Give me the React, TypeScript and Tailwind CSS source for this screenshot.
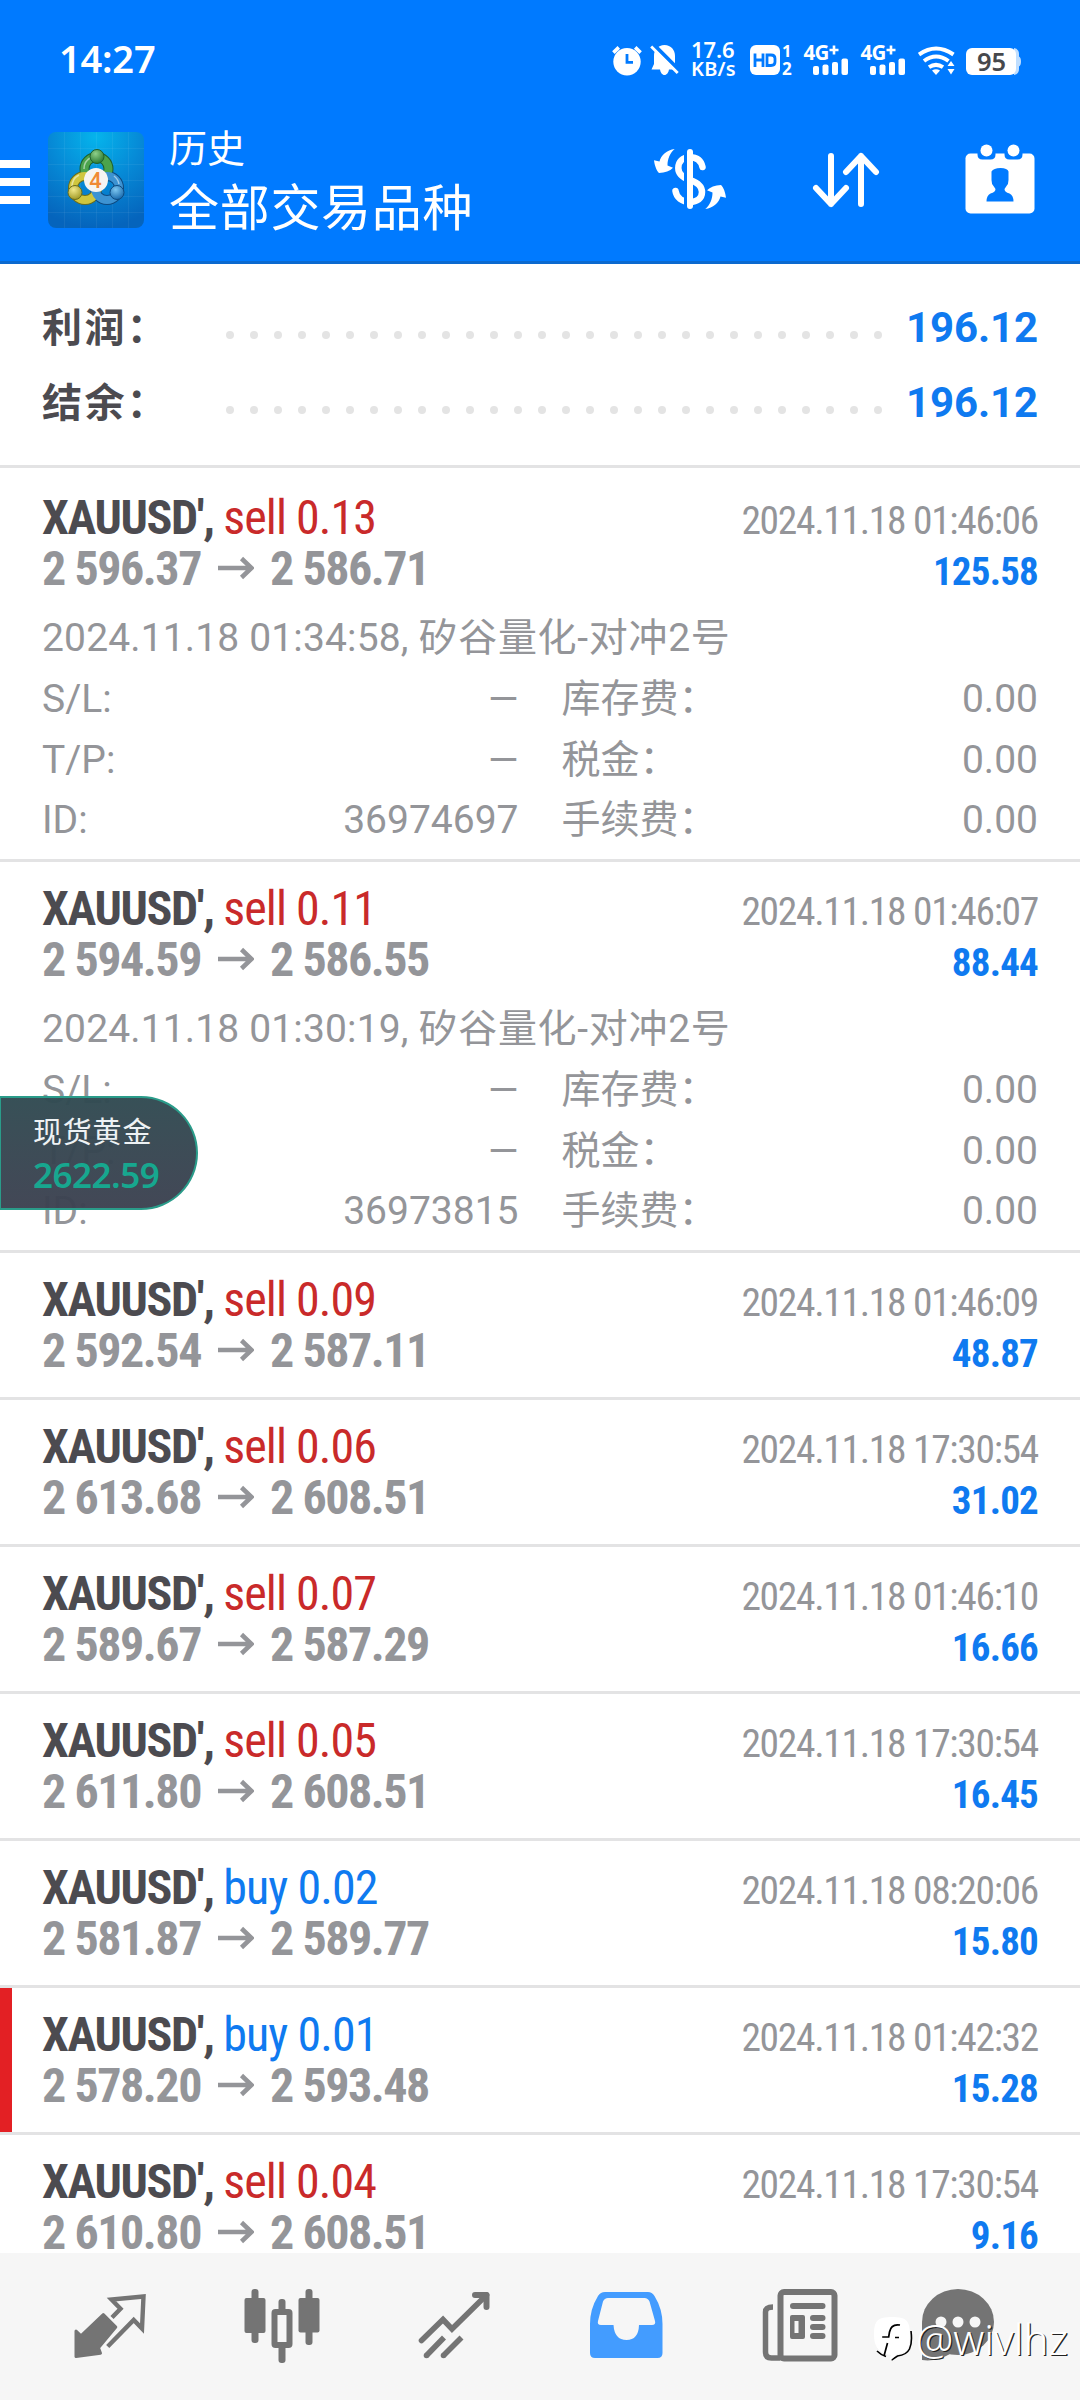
interface IDeal {
  side: 'sell' | 'buy';
  volume: string;
  open: string;
  close: string;
  time: string;
  profit: string;
  marked?: boolean;
  details?: { time: string; comment: string; id: string };
}

const deals: IDeal[] = [
  {
    side: 'sell', volume: '0.13', open: '2 596.37', close: '2 586.71', time: '2024.11.18 01:46:06', profit: '125.58',
    details: { time: '2024.11.18 01:34:58', comment: '矽谷量化-对冲2号', id: '36974697' }
  },
  {
    side: 'sell', volume: '0.11', open: '2 594.59', close: '2 586.55', time: '2024.11.18 01:46:07', profit: '88.44',
    details: { time: '2024.11.18 01:30:19', comment: '矽谷量化-对冲2号', id: '36973815' }
  },
  { side: 'sell', volume: '0.09', open: '2 592.54', close: '2 587.11', time: '2024.11.18 01:46:09', profit: '48.87' },
  { side: 'sell', volume: '0.06', open: '2 613.68', close: '2 608.51', time: '2024.11.18 17:30:54', profit: '31.02' },
  { side: 'sell', volume: '0.07', open: '2 589.67', close: '2 587.29', time: '2024.11.18 01:46:10', profit: '16.66' },
  { side: 'sell', volume: '0.05', open: '2 611.80', close: '2 608.51', time: '2024.11.18 17:30:54', profit: '16.45' },
  { side: 'buy', volume: '0.02', open: '2 581.87', close: '2 589.77', time: '2024.11.18 08:20:06', profit: '15.80' },
  { side: 'buy', volume: '0.01', open: '2 578.20', close: '2 593.48', time: '2024.11.18 01:42:32', profit: '15.28', marked: true },
  { side: 'sell', volume: '0.04', open: '2 610.80', close: '2 608.51', time: '2024.11.18 17:30:54', profit: '9.16' }
];

const Signal = () => (
  <svg className="w-[46px] h-8 overflow-visible" viewBox="803 44 46 32" fill="white">
    <text x="803.5" y="60" fontSize="20.5" fontWeight="700" letterSpacing="-0.8" fontFamily="Noto Sans">4G</text>
    <path d="M829.5 50h9M834 45.500v9" stroke="white" strokeWidth="2.6" />
    <rect x="813" y="66" width="6" height="9" rx="2" />
    <rect x="822.5" y="64.5" width="6" height="10.5" rx="2" />
    <rect x="832" y="62" width="6" height="13" rx="2" />
    <rect x="841.5" y="58.5" width="6.5" height="16.5" rx="2" />
  </svg>
);

const StatusBar = () => (
  <div className="h-[96px] pt-6 pl-[59px] pr-[59px] flex items-center justify-between text-white">
    <div className="mb-[4px] font-['Noto_Sans',sans-serif] font-semibold text-[38px] leading-none tracking-[-0.2px]">14:27</div>
    <div className="flex items-center">
      <svg className="w-[30px] h-8" viewBox="612 44 30 32">
        <circle cx="627" cy="61.7" r="13.7" fill="white" />
        <path d="M613.4 52.6l5.4-5.2M640.6 52.6l-5.4-5.2" stroke="white" strokeWidth="3.6" />
        <path d="M627 54v8.4h6" stroke="#007aff" strokeWidth="2.8" fill="none" />
      </svg>
      <svg className="w-[30px] h-8 ml-[8px]" viewBox="650 44 30 32">
        <path d="M664.500 45c-6.600 0-10.500 5-10.500 11v8l-2.500 5.500h8.500c.5 3 2.200 5.500 4.500 5.500s4-2.500 4.500-5.500h8.500l-2.500-5.500v-8c0-6-3.900-11-10.500-11z" fill="white" />
        <path d="M652 43l28 28" stroke="#007aff" strokeWidth="4" />
        <path d="M651.200 46.500l26.500 26.500" stroke="white" strokeWidth="2.800" />
      </svg>
      <div className="ml-[11px] w-[46px] mb-[3px] font-['Noto_Sans',sans-serif] font-semibold whitespace-nowrap">
        <div className="text-[22px] leading-[20px] tracking-[-0.1px]">17.6</div>
        <div className="text-[20px] leading-[19px] tracking-[0.2px]">KB/s</div>
      </div>
      <svg className="w-[44px] h-8 ml-[13px] overflow-visible" viewBox="750 44 44 32">
        <rect x="750" y="45" width="30" height="30" rx="6" fill="white" />
        <path d="M755 53.500v13.500M763 53.500v13.500M755 60h8M767 55h4q4 0 4 3.500v3.500q0 3.500-4 3.500h-4z" stroke="#007aff" strokeWidth="2.800" fill="none" />
        <text x="782" y="57" fontSize="16.500" fontWeight="700" fill="white" fontFamily="Noto Sans">1</text>
        <text x="782" y="75" fontSize="17" fontWeight="700" fill="white" fontFamily="Noto Sans">2</text>
      </svg>
      <div className="ml-[9px]"><Signal /></div>
      <div className="ml-[11px]"><Signal /></div>
      <svg className="w-[38px] h-8 ml-[12px]" viewBox="918 44 38 32" fill="none" stroke="white" strokeWidth="4">
        <path d="M919 54.500q17-12 34.500 0" />
        <path d="M924 61q12-9 24.500 0" />
        <path d="M929 67.200q7-4.700 14 0" />
        <path d="M932 70.500q4-2.500 8 0l-4 4.500z" fill="white" stroke="none" />
        <path d="M947.500 66l3.500-5 3.500 5zM947.500 69l3.500 5.500 3.500-5.500z" fill="white" stroke="none" />
      </svg>
      <svg className="w-[55px] h-8 ml-[10px] overflow-visible" viewBox="966 44 55 32">
        <path d="M1014 48q5 1 5 6v2.500q2 1 2 5t-2 5v2.500q0 5-5 6z" fill="#bfdeff" />
        <rect x="966" y="48" width="50" height="27" rx="6" fill="white" />
        <text x="991.500" y="71" fontSize="25.500" fontWeight="600" textAnchor="middle" fill="#46484c" fontFamily="Noto Sans">95</text>
      </svg>
    </div>
  </div>
);

const AppLogo = () => (
  <svg className="size-24" viewBox="0 0 96 96">
    <defs>
      <radialGradient id="sky" cx="0.5" cy="0.05" r="0.95">
        <stop offset="0" stopColor="#05b4ec" />
        <stop offset="0.5" stopColor="#0689d6" />
        <stop offset="1" stopColor="#0564bc" />
      </radialGradient>
      <radialGradient id="green" cx="0.4" cy="0.3" r="0.8">
        <stop offset="0" stopColor="#8fd08a" />
        <stop offset="1" stopColor="#1d6e27" />
      </radialGradient>
      <radialGradient id="yellow" cx="0.4" cy="0.3" r="0.8">
        <stop offset="0" stopColor="#f2e98a" />
        <stop offset="1" stopColor="#96901a" />
      </radialGradient>
      <radialGradient id="blue" cx="0.4" cy="0.3" r="0.8">
        <stop offset="0" stopColor="#7cc6f0" />
        <stop offset="1" stopColor="#0d5fa5" />
      </radialGradient>
    </defs>
    <rect width="96" height="96" rx="8" fill="url(#sky)" />
    <path
      d="M16.500 0v96M32.500 0v96M48.500 0v96M64.500 0v96M80.500 0v96M0 16.500h96M0 32.500h96M0 48.500h96M0 64.500h96M0 80.500h96"
      stroke="white" strokeOpacity="0.060"
    />
    <g fill="none" strokeWidth="10">
      <circle cx="48.500" cy="37" r="12" stroke="#1f5f2c" />
      <circle cx="37" cy="56" r="12" stroke="#6a6d1c" />
      <circle cx="59" cy="56" r="12" stroke="#0e4a80" />
    </g>
    <g fill="none" strokeWidth="8">
      <circle cx="48.500" cy="37" r="12" stroke="#4ba34c" />
      <circle cx="37" cy="56" r="12" stroke="#cfc63e" />
      <circle cx="59" cy="56" r="12" stroke="#3d93d2" />
    </g>
    <g fill="none" strokeWidth="1.500" strokeOpacity="0.500" stroke="white">
      <path d="M36 37a12.500 12.500 0 0 1 6-11M24 55a13 13 0 0 1 7-12M71 52a13 13 0 0 0-5-8" />
    </g>
    <circle cx="49" cy="24.500" r="7" fill="url(#green)" stroke="#1f5f2c" />
    <circle cx="27" cy="60.500" r="7" fill="url(#yellow)" stroke="#6a6d1c" />
    <circle cx="69" cy="60.500" r="7" fill="url(#blue)" stroke="#0e4a80" />
    <circle cx="48" cy="48" r="12" fill="#f6f4f2" />
    <text x="47.500" y="55.500" fontSize="21" fontWeight="600" textAnchor="middle" fill="#f08a34" fontFamily="Noto Sans">4</text>
  </svg>
);

const Header = () => (
  <div className="h-[264px] bg-[#007aff] border-b-3 border-[#0b69cf]">
    <StatusBar />
    <div className="flex items-center h-[168px] pb-[1px]">
      <div className="w-[30px] mt-[4px] flex flex-col gap-[10px]">
        <div className="h-2 bg-white" />
        <div className="h-2 bg-white" />
        <div className="h-2 bg-white" />
      </div>
      <div className="ml-[18px]"><AppLogo /></div>
      <div className="ml-[25px] flex-1 text-white font-['Roboto','Noto_Sans_CJK_SC',sans-serif]">
        <div className="text-[38px] leading-[52px] mt-[6px]">历史</div>
        <div className="text-[50px] leading-[68px] tracking-[0.7px]">全部交易品种</div>
      </div>
      <svg className="w-[74px] h-[62px] mb-[1px]" viewBox="653 149 74 62" fill="white">
        <path
          d="M702.500 168C701 161.500 696.500 158.300 690 158.300C682.500 158.300 678.300 163 678.300 169C678.300 176 684 179 690 181C697.500 183.500 702 187 702 193C702 199.500 697 202.800 690 202.800C682 202.800 676.500 198.500 675.500 192"
          fill="none" stroke="white" strokeWidth="6.500" strokeLinecap="round"
        />
        <rect x="684" y="149" width="5" height="62" fill="#007aff" />
        <rect x="687" y="150" width="6" height="60" rx="3" />
        <path d="M674.700 150C667 151 661 156 659.500 162.500L654 161.300C654.500 166 656.500 172 659 174C665 173.500 670 172 673 168.700L667.500 166.500C667.500 160 670 154 674.700 150Z" />
        <path transform="rotate(180 690 180)" d="M674.700 150C667 151 661 156 659.500 162.500L654 161.300C654.500 166 656.500 172 659 174C665 173.500 670 172 673 168.700L667.500 166.500C667.500 160 670 154 674.700 150Z" />
      </svg>
      <svg
        className="w-[68px] h-[56px] ml-[85px] mt-px" viewBox="812 152 68 56"
        fill="none" stroke="white" strokeWidth="6" strokeLinecap="round" strokeLinejoin="round"
      >
        <path d="M831 156v48M816 188l15 16 15-16" />
        <path d="M861 204v-48M846 172l15-16 15 16" />
      </svg>
      <svg className="w-[70px] h-[70px] ml-[85px] mr-[45px] mb-[2px]" viewBox="965.500 143.500 70 70">
        <rect x="966" y="153" width="69" height="60" rx="5" fill="white" />
        <path d="M978 150v4q0 5 5 5h8q5 0 5-5v-4zM1005 150v4q0 5 5 5h8q5 0 5-5v-4z" fill="#007aff" />
        <circle cx="987" cy="150" r="6" fill="white" />
        <circle cx="1014" cy="150" r="6" fill="white" />
        <path d="M992 171q2-3.500 9-3.500t8 3.500v8.500q0 4-2 6l-2 3q0 3 5 4.500 4 2 4 8h-27q0-6 4-8 5-1.500 5-4.500l-2-3q-2-2-2-6z" fill="#007aff" />
      </svg>
    </div>
  </div>
);

const SummaryRow = ({ label, value }: { label: string; value: string }) => (
  <div className="h-[75px] flex items-baseline leading-[75px]">
    <div className="w-[184px] text-[40px] tracking-[2.4px] font-bold text-[#4c4b50]">{label}</div>
    <div className="w-[656px] flex justify-between self-center mt-[15px]">
      {Array.from({ length: 28 }, (_, i) => (
        <div key={i} className="size-2 rounded-full bg-[#e4e4e4]" />
      ))}
    </div>
    <div className="flex-1 text-right text-[42px] tracking-[-0.1px] font-bold text-[#0f7af0]">{value}</div>
  </div>
);

const DetailRow = ({ label, value }: { label: string; value: string }) => (
  <div className="flex justify-between">
    <span>{label}</span>
    <span>{value}</span>
  </div>
);

const Arrow = () => (
  <svg className="inline-block w-9 h-6 ml-[17.5px] mr-[15.5px] align-[5px]" viewBox="0 0 36 24" fill="none" stroke="#949599" strokeWidth="4.500">
    <path d="M0 12h33M23.500 2.500l10 9.500-10 9.500" />
  </svg>
);

const DealRow = ({ deal }: { deal: IDeal }) => (
  <div
    className={`relative px-[42px] pt-[21px] border-b-3 border-[#e3e3e4] text-[#949599] ${
      deal.details ? 'h-[391px]' : 'h-[147px]'
    }`}
  >
    {deal.marked && <div className="absolute left-0 top-0 w-3 h-full bg-[#e32024]" />}
    <div className="font-['Roboto_Condensed',sans-serif] leading-[51px]">
      <div className="h-[51px] flex justify-between items-baseline">
        <div className="text-[48px]">
          <span className="font-bold text-[#4c4b50] tracking-[-1.35px]">XAUUSD', </span>
          <span className={deal.side === 'sell' ? 'text-[#c92a2a] tracking-[-0.95px]' : 'text-[#0f7af0] tracking-[-0.95px]'}>
            {deal.side} {deal.volume}
          </span>
        </div>
        <div className="text-[39.5px] tracking-[-1.3px]">{deal.time}</div>
      </div>
      <div className="h-[51px] flex justify-between items-baseline font-bold">
        <div className="text-[48px] tracking-[-1.45px]">
          {deal.open}
          <Arrow />
          {deal.close}
        </div>
        <div className="text-[39px] text-[#0f7af0] tracking-[-0.8px]">{deal.profit}</div>
      </div>
    </div>
    {deal.details && (
      <div className="text-[39px]">
        <div className="mt-[14px] leading-[61px]">
          <span className="tracking-[0.15px]">{deal.details.time}, </span>
          <span className="tracking-[0.7px]">{deal.details.comment}</span>
        </div>
        <div className="grid grid-cols-2 gap-x-[43px] leading-[60.5px]">
          <DetailRow label="S/L:" value="—" />
          <DetailRow label="库存费：" value="0.00" />
          <DetailRow label="T/P:" value="—" />
          <DetailRow label="税金：" value="0.00" />
          <DetailRow label="ID:" value={deal.details.id} />
          <DetailRow label="手续费：" value="0.00" />
        </div>
      </div>
    )}
  </div>
);

const QuoteBadge = () => (
  <div className="absolute left-0 top-[1096px] w-[198px] h-[114px] pl-[32px] pt-[13px] rounded-r-full border-2 border-l border-[#2a9c8a] bg-linear-to-b from-[#314b52]/97 to-[#3d4251]/97">
    <div className="text-[29px] leading-[44px] tracking-[0.8px] text-[#eef2f4]">现货黄金</div>
    <div className="font-['Noto_Sans',sans-serif] font-semibold text-[35px] leading-[39px] tracking-[-0.5px] text-[#17a78f]">2622.59</div>
  </div>
);

const BottomBar = () => (
  <div className="absolute left-0 top-[2253px] w-full h-[147px] bg-[#f6f6f6] pl-6 flex">
    <div className="w-[172px] flex justify-center pt-[31px]">
      <svg className="w-[80px] h-[80px]" viewBox="70 2284 80 80" fill="#747474">
        <path d="M112 2317.500l8.500-8.700-9-9.300 32-3-1.500 32-8.300-8.500-26 26.500" fill="none" stroke="#747474" strokeWidth="4.400" />
        <path
          d="M103.300 2314.500L115.800 2327L98.500 2347.800L100.500 2353.200L76 2356.500V2331L81 2335.800Z"
          stroke="#747474" strokeWidth="3" strokeLinejoin="round"
        />
      </svg>
    </div>
    <div className="w-[172px] flex justify-center pt-[31px]">
      <svg className="w-[80px] h-[80px]" viewBox="241.500 2284 80 80" fill="#747474">
        <rect x="244" y="2298" width="21" height="35" rx="2" />
        <rect x="251" y="2289" width="7" height="54" rx="3" />
        <rect x="274" y="2312" width="15" height="33" rx="1" fill="none" stroke="#747474" strokeWidth="6" />
        <rect x="278" y="2299" width="7" height="14" rx="3" />
        <rect x="278" y="2344" width="7" height="19" rx="3" />
        <rect x="298" y="2298" width="21" height="34.500" rx="2" />
        <rect x="305" y="2289" width="7" height="56" rx="3" />
      </svg>
    </div>
    <div className="w-[172px] flex justify-center pt-[31px]">
      <svg className="w-[80px] h-[80px]" viewBox="413.500 2284 80 80" fill="none" stroke="#747474" strokeWidth="5.600">
        <path d="M421 2340.500l21.500-21 9 9.500 34.500-34" strokeLinecap="round" />
        <path d="M474.500 2295H486V2307" strokeLinecap="round" strokeLinejoin="round" strokeWidth="6" />
        <path d="M426 2355.500L443.500 2337.500M443 2355.500L461 2337.500" />
        <g fill="#747474" stroke="none">
          <circle cx="426" cy="2355.500" r="2.800" />
          <circle cx="443" cy="2355.500" r="2.800" />
        </g>
      </svg>
    </div>
    <div className="w-[172px] flex justify-center pt-[31px]">
      <svg className="w-[80px] h-[80px]" viewBox="586 2284 80 80">
        <path
          fill="#439cff" fillRule="evenodd"
          d="M605 2292H648Q652 2292 654.500 2296Q662.500 2309 662.500 2324V2353Q662.500 2358 657.500 2358H595Q590 2358 590 2353V2324Q590 2309 598 2296Q600.500 2292 605 2292ZM608 2298Q604.500 2298 603 2301.500L598 2321Q597 2325 601 2325H613.500Q614.500 2340 626.500 2340Q638.500 2340 639 2325H652Q656 2325 655 2321L649.500 2301.500Q648 2298 644.500 2298Z"
        />
      </svg>
    </div>
    <div className="w-[172px] flex justify-center pt-[31px]">
      <svg className="w-[80px] h-[80px]" viewBox="758 2284 80 80" fill="#747474">
        <rect x="780.500" y="2292" width="54" height="66.500" rx="3.500" fill="none" stroke="#747474" strokeWidth="6" />
        <path d="M773 2307q-7.500 0-7.500 5v40q0 6 6 6h9" fill="none" stroke="#747474" strokeWidth="5.500" />
        <rect x="790" y="2303" width="35.500" height="6" rx="3" />
        <path fillRule="evenodd" d="M792 2315h11q2 0 2 2v20q0 2-2 2h-11q-2 0-2-2v-20q0-2 2-2zM794.500 2321v12h4v-12z" />
        <rect x="810" y="2315" width="15.500" height="6" rx="3" />
        <rect x="810" y="2324" width="15.500" height="6" rx="3" />
        <rect x="810" y="2333" width="15.500" height="6" rx="3" />
      </svg>
    </div>
    <div className="w-[148px] flex justify-center pt-[31px]">
      <svg className="w-[80px] h-[80px]" viewBox="918 2284 80 80">
        <ellipse cx="958" cy="2322" rx="36" ry="33" fill="#747474" />
        <path d="M922 2322v38q14 2 28-6z" fill="#747474" />
        <circle cx="941" cy="2322" r="5.500" fill="#f6f6f6" />
        <circle cx="958" cy="2322" r="5.500" fill="#f6f6f6" />
        <circle cx="975" cy="2322" r="5.500" fill="#f6f6f6" />
      </svg>
    </div>
  </div>
);

const Watermark = () => (
  <div className="absolute left-[873px] top-[2314px] flex items-center">
    <svg className="w-[40px] h-[50px]" viewBox="874 2318 40 50">
      <path d="M878 2355q4 4 9 5.500M912 2335q1.500 12-1.500 18t-12 7l-6 4" fill="none" stroke="black" strokeWidth="1.600" />
      <path d="M893 2321c14 0 18 3 18 18 0 15-4 18.500-13 19l-6 6q-2 0 0-5l-5-1c-8-3-12-8-12-19 0-15 4-18 18-18z" fill="white" />
      <path d="M901 2329c-6-1-9.500 1.500-10.500 7l-.800 5h-6.500M896 2341.500h4M888.500 2347l-3.500 13" fill="none" stroke="black" strokeWidth="1.700" />
    </svg>
    <div className="ml-[3px] font-['Noto_Sans',sans-serif] font-light text-[42px] leading-[50px] text-white [text-shadow:1.2px_1.2px_0.3px_#222]">@wivlhz</div>
  </div>
);

export default function App() {
  return (
    <div className="relative w-[1080px] h-[2400px] overflow-hidden bg-white font-['Roboto','Noto_Sans_CJK_SC',sans-serif]">
      <Header />
      <div className="h-[207px] pt-[26px] px-[42px]">
        <SummaryRow label="利润：" value="196.12" />
        <SummaryRow label="结余：" value="196.12" />
        <div className="-mx-[42px] mt-[25px] h-[3px] bg-[#e3e3e4]" />
      </div>
      {deals.map((deal, i) => (
        <DealRow key={i} deal={deal} />
      ))}
      <QuoteBadge />
      <BottomBar />
      <Watermark />
    </div>
  );
}
